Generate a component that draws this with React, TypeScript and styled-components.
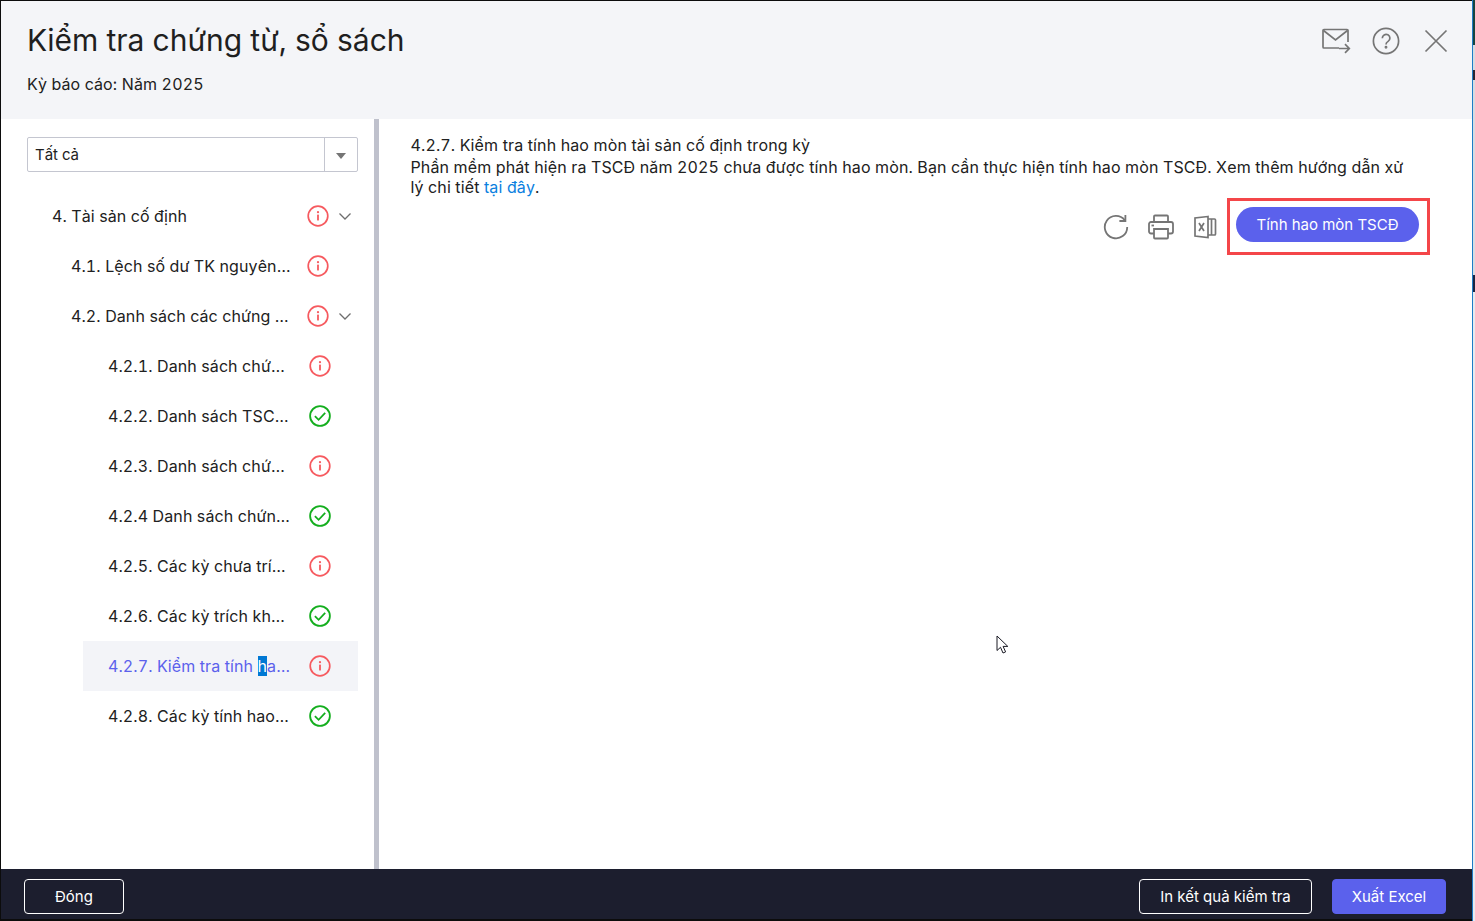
import styled, { createGlobalStyle } from "styled-components";

const GlobalStyle = createGlobalStyle`
  html, body {
    margin: 0;
    padding: 0;
    background: #fff;
  }
  body {
    font-family: Inter, "Noto Sans", sans-serif;
    font-kerning: none;
    font-variant-numeric: tabular-nums;
    color: #212121;
    overflow: hidden;
  }
  button {
    font-kerning: none;
  }
`;

const primary = "#5b61ec";

const Page = styled.div`
  display: flex;
  width: 1475px;
  height: 921px;
  position: relative;
`;

const Dialog = styled.div`
  width: 1472px;
  height: 921px;
  box-sizing: border-box;
  border-top: 1px solid #0c0c0c;
  border-left: 1px solid #0c0c0c;
  border-bottom: 2px solid #0c0c0c;
  display: flex;
  flex-direction: column;
  background: #fff;
`;

const DesktopEdge = styled.div`
  width: 3px;
  height: 921px;
  border-left: 1px solid #1f7cc6;
  box-sizing: border-box;
  background: linear-gradient(
    to bottom,
    #17453f 0 45px,
    #d8dbe0 45px 70px,
    #2a2630 70px 80px,
    #d8dbe0 80px 275px,
    #1b2440 275px 292px,
    #e8eaee 292px 921px
  );
`;

const Header = styled.header`
  height: 118px;
  flex: none;
  box-sizing: border-box;
  background: #f4f5f8;
  padding: 20px 21px 0 26px;
  display: flex;
  justify-content: space-between;
`;

const TitleBlock = styled.div`
  display: flex;
  flex-direction: column;
`;

const Title = styled.h1`
  margin: 0;
  font-size: 30px;
  line-height: 38px;
  font-weight: 400;
  letter-spacing: 0.03px;
  color: #1f1f1f;
`;

const Period = styled.div`
  margin-top: 14px;
  font-size: 16px;
  line-height: 22px;
  letter-spacing: 0.14px;
`;

const HeaderActions = styled.div`
  display: flex;
  gap: 20px;
  height: 40px;
  align-items: center;
`;

const HeaderIcon = styled.button`
  width: 30px;
  height: 30px;
  padding: 0;
  border: 0;
  background: none;
  display: flex;
  align-items: center;
  justify-content: center;
`;

const Body = styled.div`
  flex: 1;
  min-height: 0;
  display: flex;
`;

const Sidebar = styled.aside`
  width: 378px;
  flex: none;
  box-sizing: border-box;
  padding: 18px 16px 0 26px;
  border-right: 5px solid #bfc1cc;
`;

const Select = styled.div`
  height: 35px;
  box-sizing: border-box;
  border: 1px solid #c4c6d0;
  border-radius: 2px;
  display: flex;
  align-items: center;
  font-size: 15px;
`;

const SelectValue = styled.div`
  flex: 1;
  padding-left: 7px;
`;

const SelectToggle = styled.div`
  width: 32px;
  height: 100%;
  border-left: 1px solid #c4c6d0;
  display: flex;
  align-items: center;
  justify-content: center;
  &::after {
    content: "";
    border-top: 6px solid #757575;
    border-left: 5.5px solid transparent;
    border-right: 5.5px solid transparent;
    margin-top: 2px;
  }
`;

const Tree = styled.div`
  margin-top: 19px;
  display: flex;
  flex-direction: column;
`;

const Row = styled.div<{ $level: number; $active?: boolean }>`
  height: 50px;
  box-sizing: border-box;
  margin-left: ${(p) => (p.$level === 1 ? 0 : p.$level === 2 ? 19 : 56)}px;
  padding-left: 25px;
  display: flex;
  align-items: center;
  font-size: 16px;
  letter-spacing: 0.1px;
  color: ${(p) => (p.$active ? primary : "#212121")};
  background: ${(p) => (p.$active ? "#f3f4f8" : "transparent")};
`;

const RowLabel = styled.div<{ $level: number }>`
  width: ${(p) => (p.$level === 1 ? 240 : p.$level === 2 ? 221 : 183)}px;
  white-space: nowrap;
  overflow: hidden;
  text-overflow: ellipsis;
`;

const Selected = styled.span`
  background: #0078d4;
  color: #fff;
`;

const StatusSlot = styled.div<{ $level: number }>`
  margin-left: ${(p) => (p.$level === 3 ? 18 : 15)}px;
  width: 22px;
  height: 22px;
  flex: none;
`;

const Chevron = styled.div`
  margin-left: 8px;
  width: 16px;
  height: 16px;
  flex: none;
`;

const Content = styled.main`
  flex: 1;
  box-sizing: border-box;
  padding: 16px 42px 0 31.5px;
  font-size: 16px;
  line-height: 20px;
  letter-spacing: 0.13px;
`;

const Heading = styled.div`
  margin-bottom: 2px;
`;

const Message = styled.div`
  max-width: 996px;
`;

const Link = styled.a`
  color: #0b7fe0;
`;

const Toolbar = styled.div`
  margin-top: 1px;
  display: flex;
  align-items: center;
  justify-content: flex-end;
`;

const ToolIcon = styled.button`
  width: 28px;
  height: 28px;
  margin-right: 17px;
  padding: 0;
  border: 0;
  background: none;
  display: flex;
  align-items: center;
  justify-content: center;
`;

const Callout = styled.div`
  margin-left: -10px;
  border: 3px solid #f44649;
  padding: 6px 8px 10px 6px;
`;

const PillButton = styled.button`
  display: block;
  width: 183px;
  height: 35px;
  border: 0;
  border-radius: 18px;
  background: ${primary};
  color: #fff;
  font: 400 15px Inter, sans-serif;
`;

const Footer = styled.footer`
  height: 50px;
  flex: none;
  box-sizing: border-box;
  background: #1c1e2e;
  padding: 10px 26px 0 23px;
  display: flex;
  align-items: flex-start;
`;

const FooterButton = styled.button<{ $width: number; $filled?: boolean }>`
  width: ${(p) => p.$width}px;
  height: 35px;
  box-sizing: border-box;
  border: 1px solid ${(p) => (p.$filled ? primary : "#fff")};
  border-radius: 4px;
  background: ${(p) => (p.$filled ? primary : "transparent")};
  color: #fff;
  font: 400 15px Inter, sans-serif;
  padding: 0;
`;

const Spacer = styled.div`
  flex: 1;
`;

const FooterGap = styled.div`
  width: 20px;
`;

const Pointer = styled.svg`
  position: absolute;
  left: 996px;
  top: 635px;
`;

function InfoIcon() {
  return (
    <svg width="22" height="22" viewBox="0 0 22 22" fill="none">
      <circle cx="11" cy="11" r="9.8" stroke="#f65a5f" strokeWidth="1.7" />
      <circle cx="11" cy="7.2" r="1.1" fill="#f65a5f" />
      <rect x="10.1" y="9.6" width="1.8" height="6" rx="0.6" fill="#f65a5f" />
    </svg>
  );
}

function CheckIcon() {
  return (
    <svg width="22" height="22" viewBox="0 0 22 22" fill="none">
      <circle cx="11" cy="11" r="9.9" stroke="#14ae1e" strokeWidth="1.8" />
      <path d="M5.9 11.2 9.6 14.8 16.2 7.9" stroke="#14ae1e" strokeWidth="1.8" />
    </svg>
  );
}

function ChevronDown() {
  return (
    <svg width="16" height="16" viewBox="0 0 16 16" fill="none">
      <path d="M2.5 5.5 8 11l5.5-5.5" stroke="#6e6e6e" strokeWidth="1.3" />
    </svg>
  );
}

const tree = [
  { level: 1, label: "4. Tài sản cố định", status: "info", open: true },
  { level: 2, label: "4.1. Lệch số dư TK nguyên giá và sổ TSCĐ", status: "info" },
  { level: 2, label: "4.2. Danh sách các chứng từ liên quan", status: "info", open: true },
  { level: 3, label: "4.2.1. Danh sách chứng từ ghi tăng", status: "info" },
  { level: 3, label: "4.2.2. Danh sách TSCĐ chưa ghi tăng", status: "ok" },
  { level: 3, label: "4.2.3. Danh sách chứng từ ghi giảm", status: "info" },
  { level: 3, label: "4.2.4 Danh sách chứng từ điều chuyển", status: "ok" },
  { level: 3, label: "4.2.5. Các kỳ chưa trích khấu hao", status: "info" },
  { level: 3, label: "4.2.6. Các kỳ trích khấu hao trùng", status: "ok" },
  { level: 3, label: "4.2.7. Kiểm tra tính hao mòn", status: "info", active: true },
  { level: 3, label: "4.2.8. Các kỳ tính hao mòn trùng", status: "ok" },
];

function renderLabel(label: string, active?: boolean) {
  if (!active) return label;
  const at = label.indexOf("hao");
  return (
    <>
      {label.slice(0, at)}
      <Selected>h</Selected>
      {label.slice(at + 1)}
    </>
  );
}

export default function App() {
  return (
    <Page>
      <GlobalStyle />
      <Dialog>
        <Header>
          <TitleBlock>
            <Title>Kiểm tra chứng từ, sổ sách</Title>
            <Period>Kỳ báo cáo: Năm 2025</Period>
          </TitleBlock>
          <HeaderActions>
            <HeaderIcon>
              <svg width="30" height="28" viewBox="0 0 30 28" fill="none" stroke="#757575" strokeWidth="1.7">
                <path d="M27 15V3.5a1 1 0 0 0-1-1H3a1 1 0 0 0-1 1V20a1 1 0 0 0 1 1h15" />
                <path d="M2.5 3.5 14.5 13 26.5 3.5" />
                <path d="M18 21.5h10M24 17.2l4.3 4.3-4.3 4.3" />
              </svg>
            </HeaderIcon>
            <HeaderIcon>
              <svg width="28" height="28" viewBox="0 0 28 28" fill="none" stroke="#757575" strokeWidth="1.7">
                <circle cx="14" cy="14" r="12.6" />
                <path d="M10.3 11.2a3.8 3.8 0 1 1 5.8 3.2c-1.3.8-2.1 1.5-2.1 3" />
                <circle cx="14" cy="20.2" r="0.6" fill="#757575" />
              </svg>
            </HeaderIcon>
            <HeaderIcon>
              <svg width="24" height="24" viewBox="0 0 24 24" fill="none" stroke="#757575" strokeWidth="1.7">
                <path d="M1.5 1.5 22.5 22.5M22.5 1.5 1.5 22.5" />
              </svg>
            </HeaderIcon>
          </HeaderActions>
        </Header>
        <Body>
          <Sidebar>
            <Select>
              <SelectValue>Tất cả</SelectValue>
              <SelectToggle />
            </Select>
            <Tree>
              {tree.map((item) => (
                <Row key={item.label} $level={item.level} $active={item.active}>
                  <RowLabel $level={item.level}>{renderLabel(item.label, item.active)}</RowLabel>
                  <StatusSlot $level={item.level}>
                    {item.status === "ok" ? <CheckIcon /> : <InfoIcon />}
                  </StatusSlot>
                  {item.open && (
                    <Chevron>
                      <ChevronDown />
                    </Chevron>
                  )}
                </Row>
              ))}
            </Tree>
          </Sidebar>
          <Content>
            <Heading>4.2.7. Kiểm tra tính hao mòn tài sản cố định trong kỳ</Heading>
            <Message>
              Phần mềm phát hiện ra TSCĐ năm 2025 chưa được tính hao mòn. Bạn cần thực hiện tính hao mòn
              TSCĐ. Xem thêm hướng dẫn xử lý chi tiết <Link>tại đây</Link>.
            </Message>
            <Toolbar>
              <ToolIcon>
                <svg width="26" height="26" viewBox="0 0 26 26" fill="none" stroke="#757575" strokeWidth="1.8">
                  <path d="M21.8 6.2A11.2 11.2 0 1 0 24.2 13" />
                  <path d="M22.4 1v6h-6" />
                </svg>
              </ToolIcon>
              <ToolIcon>
                <svg width="26" height="26" viewBox="0 0 26 26" fill="none" stroke="#757575" strokeWidth="1.8">
                  <path d="M6 8V2.5a1 1 0 0 1 1-1h12a1 1 0 0 1 1 1V8" />
                  <path d="M6 19.5H3a2 2 0 0 1-2-2V10a2 2 0 0 1 2-2h20a2 2 0 0 1 2 2v7.500a2 2 0 0 1-2 2h-3" />
                  <path d="M6 15h14v8.500a1 1 0 0 1-1 1H7a1 1 0 0 1-1-1z" />
                  <path d="M3.500 11.500h2.500" />
                </svg>
              </ToolIcon>
              <ToolIcon>
                <svg width="24" height="24" viewBox="1 0 24 24" fill="none" stroke="#757575" strokeWidth="1.7">
                  <path d="M15 1.500 2 3v18l13 1.500z" />
                  <path d="M15 4h6.500a1 1 0 0 1 1 1v14a1 1 0 0 1-1 1H15" />
                  <path d="M18.500 4v16" />
                  <path d="M6 8l5 8M11 8l-5 8" />
                </svg>
              </ToolIcon>
              <Callout>
                <PillButton>Tính hao mòn TSCĐ</PillButton>
              </Callout>
            </Toolbar>
          </Content>
        </Body>
        <Footer>
          <FooterButton $width={100}>Đóng</FooterButton>
          <Spacer />
          <FooterButton $width={173}>In kết quả kiểm tra</FooterButton>
          <FooterGap />
          <FooterButton $width={114} $filled>
            Xuất Excel
          </FooterButton>
        </Footer>
      </Dialog>
      <DesktopEdge />
      <Pointer width="14" height="20" viewBox="0 0 14 20">
        <path d="M1 1v14.500l3.500-3.200 2.500 5.700 2.600-1.100-2.500-5.500h4.700z" fill="#fff" stroke="#1a1a24" strokeWidth="1" />
      </Pointer>
    </Page>
  );
}
